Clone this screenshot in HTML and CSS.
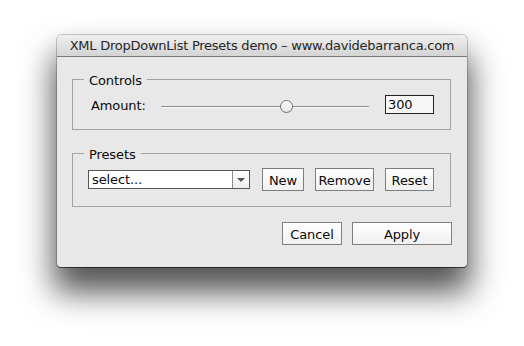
FILE: index.html
```html
<!DOCTYPE html>
<html lang="en">
<head>
  <meta charset="UTF-8" />
  <title>XML DropDownList Presets demo</title>
  <link rel="stylesheet" href="styles.css">
</head>
<body>

  <div id="dialog">
    <div id="titlebar">XML DropDownList Presets demo – www.davidebarranca.com</div>

    <div id="content">
      <fieldset class="panel">
        <legend>Controls</legend>
        <div class="row">
          <span class="label">Amount:</span>
          <div class="slider">
            <div class="track"></div>
            <div class="thumb"></div>
          </div>
          <div class="textbox">300</div>
        </div>
      </fieldset>

      <fieldset class="panel">
        <legend>Presets</legend>
        <div class="row presets">
          <div class="dropdown">
            <span class="value">select...</span>
            <span class="arrow"></span>
          </div>
          <button class="btn btn-new">New</button>
          <button class="btn btn-remove">Remove</button>
          <button class="btn btn-reset">Reset</button>
        </div>
      </fieldset>

      <div id="footer">
        <button class="btn btn-cancel">Cancel</button>
        <button class="btn btn-apply">Apply</button>
      </div>
    </div>
  </div>

</body>
</html>
```

FILE: styles.css
```css
body {
  margin: 0;
  background-color: #fff;
  font-family: "DejaVu Sans", sans-serif;
  font-size: 13px;
  letter-spacing: -0.1px;
  color: #0a0a0a;
  height: 346px;
  overflow: hidden;
}

#dialog {
  margin: 35px 0 0 57px;
  width: 410px;
  height: 232px;
  background-color: #e8e8e8;
  border-radius: 5px 5px 4px 4px;
  box-shadow: 0 22px 32px 3px rgba(0,0,0,0.68), 0 0 0 1px rgba(0,0,0,0.2), 0 1px 0 0 rgba(0,0,0,0.5);
  display: flex;
  flex-direction: column;
}

#titlebar {
  height: 21px;
  line-height: 22px;
  text-align: center;
  letter-spacing: -0.25px;
  color: #262626;
  background: linear-gradient(#efefef, #d4d4d4);
  border-bottom: 1px solid #7c7c7c;
  border-radius: 5px 5px 0 0;
  white-space: nowrap;
}

#content {
  padding: 14px 16px 20px 15px;
  display: flex;
  flex-direction: column;
  gap: 15px;
}

.panel {
  margin: 0;
  padding: 0;
  border: 1px solid #a2a2a2;
  min-width: 0;
}

.panel legend {
  margin-left: 11px;
  padding: 0 5px;
  height: 16px;
  line-height: 19px;
}

.row {
  display: flex;
  align-items: center;
  padding: 8px 16px 15px 18px;
}

.row.presets {
  padding: 7px 16px 15px 15px;
}

.label {
  width: 70px;
  padding-top: 1px;
}

.slider {
  position: relative;
  flex: 1;
  height: 19px;
  margin-right: 16px;
}

.track {
  position: absolute;
  left: 0;
  right: 0;
  top: 11px;
  height: 1px;
  background-color: #8a8a8a;
  border-bottom: 1px solid #fafafa;
  border-radius: 1px;
}

.thumb {
  position: absolute;
  left: 119px;
  top: 5px;
  width: 11px;
  height: 11px;
  border-radius: 50%;
  background: linear-gradient(#ffffff, #e4e4e4);
  border: 1px solid #707070;
}

.textbox {
  width: 45px;
  height: 17px;
  line-height: 18px;
  padding-left: 2px;
  border: 1px solid #222;
  background-color: #f7f7f7;
}

.dropdown {
  display: flex;
  width: 160px;
  height: 17px;
  border: 1px solid #555;
  background-color: #fff;
  margin-right: 12px;
}

.dropdown .value {
  flex: 1;
  padding-left: 3px;
  line-height: 18px;
}

.dropdown .arrow {
  width: 16px;
  border-left: 1px solid #8c8c8c;
  background: linear-gradient(#ffffff, #ededed);
  display: flex;
  align-items: center;
  justify-content: center;
}

.dropdown .arrow::after {
  content: "";
  border-left: 4px solid transparent;
  border-right: 4px solid transparent;
  border-top: 4px solid #555;
}

.btn {
  font-family: "DejaVu Sans", sans-serif;
  font-size: 13px;
  letter-spacing: -0.1px;
  color: #0a0a0a;
  height: 23px;
  padding: 1px 0 0;
  border: 1px solid #7e7e7e;
  background: linear-gradient(#ffffff, #f0f0f0);
  border-radius: 0;
}

.btn-new { width: 42px; margin-right: 11px; }
.btn-remove { width: 59px; margin-right: 11px; }
.btn-reset { width: 49px; }

#footer {
  display: flex;
  justify-content: flex-end;
  gap: 10px;
  margin-right: -1px;
}

.btn-cancel { width: 60px; }
.btn-apply { width: 100px; }
```
